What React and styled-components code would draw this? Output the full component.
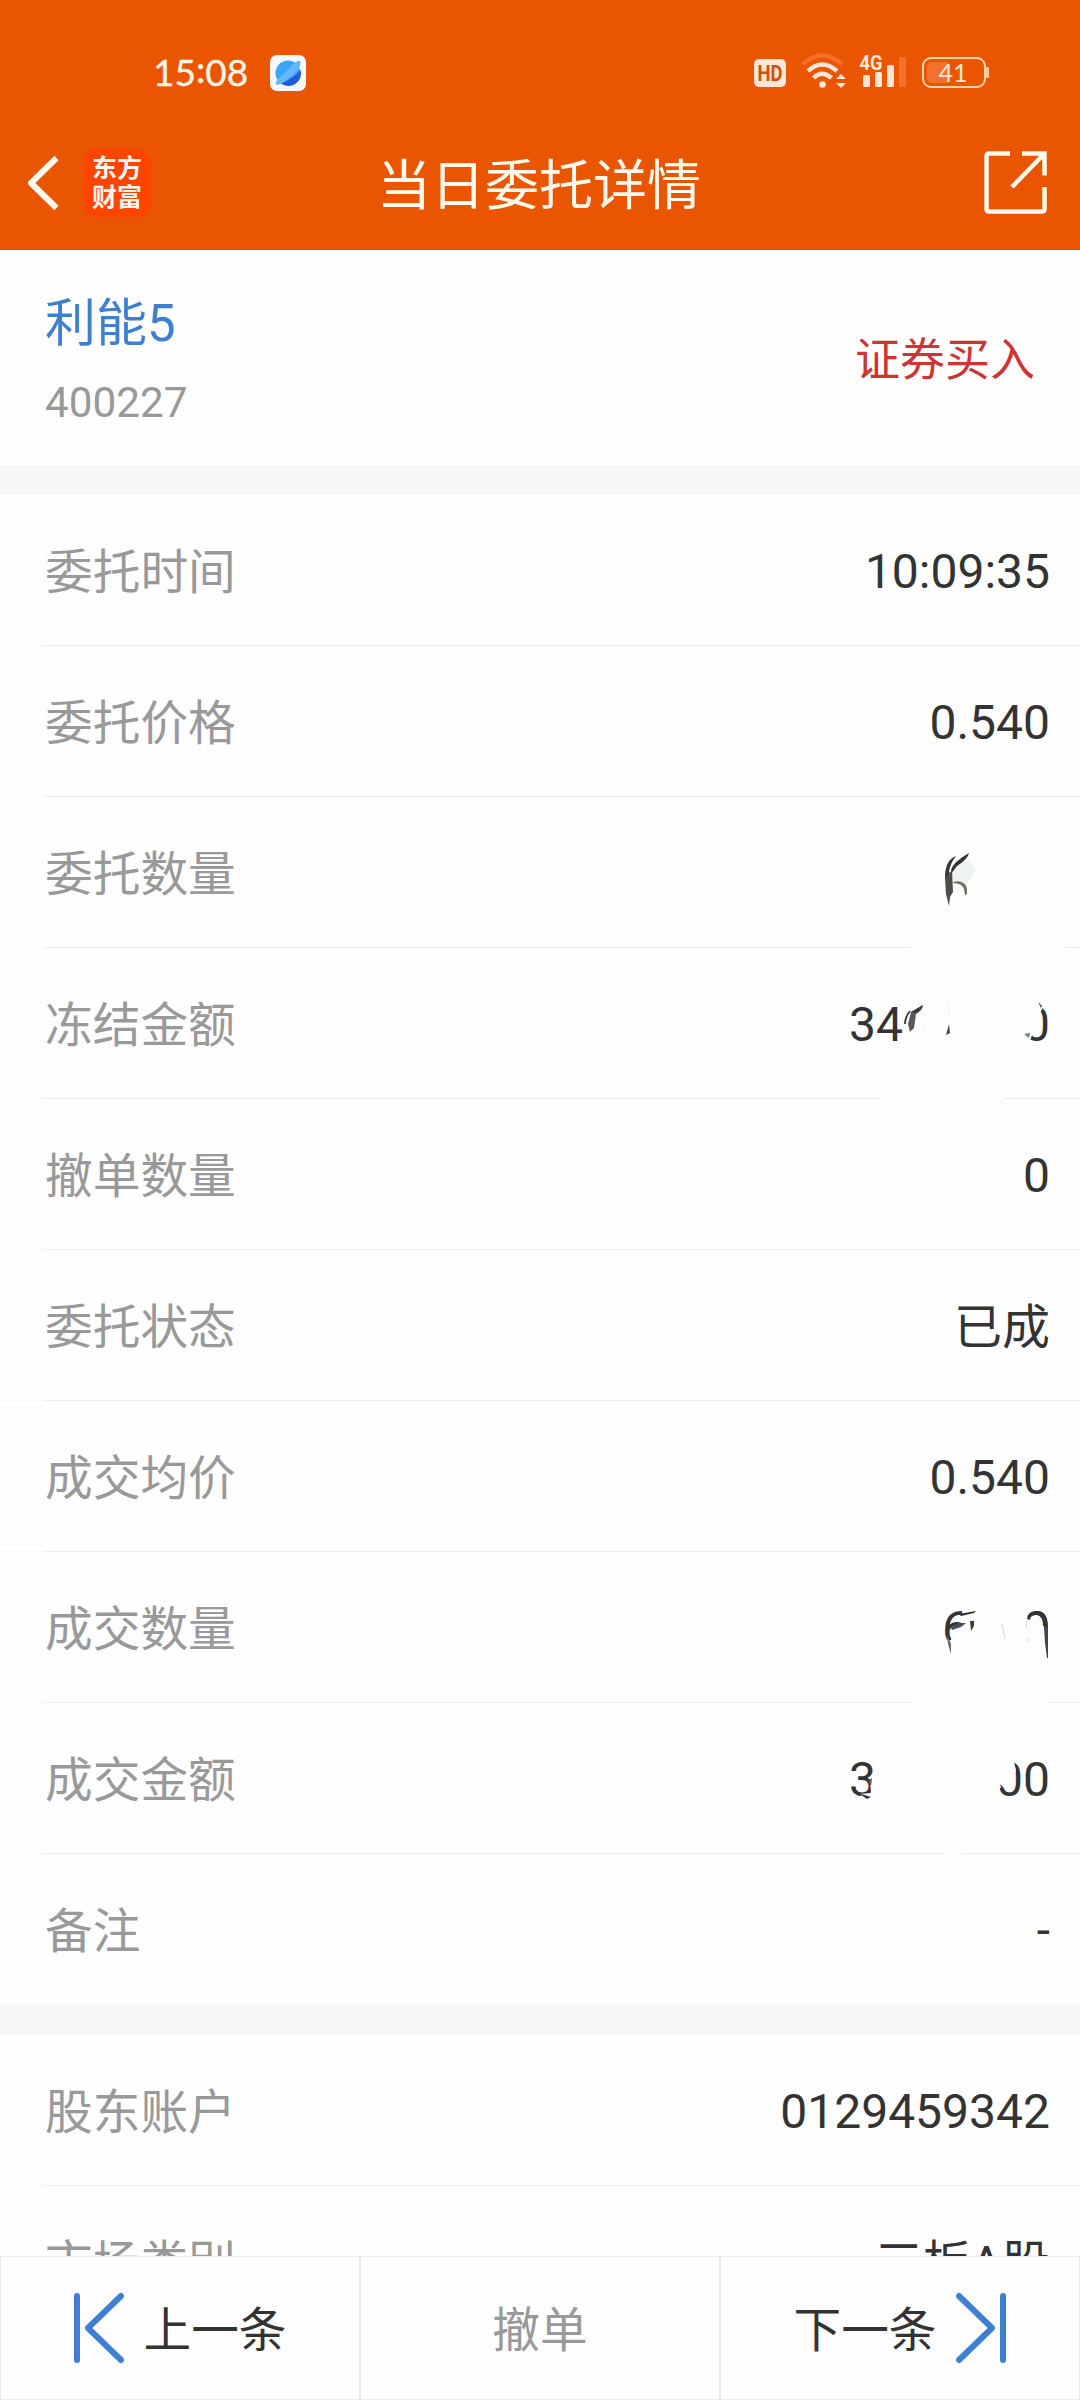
import React from "react";
import styled, { createGlobalStyle } from "styled-components";

const orderRows = [
  { label: "委托时间", value: "10:09:35" },
  { label: "委托价格", value: "0.540" },
  { label: "委托数量", value: "", smudge: "amount" },
  { label: "冻结金额", head: "34", tail: "0" },
  { label: "撤单数量", value: "0" },
  { label: "委托状态", value: "已成", hanzi: true },
  { label: "成交均价", value: "0.540" },
  { label: "成交数量", head: "6", tail: "0", width: 108, smudge: "deal" },
  { label: "成交金额", head: "3", tail: "00" },
  { label: "备注", value: "-" },
];

const accountRows = [
  { label: "股东账户", value: "0129459342" },
  { label: "市场类别", value: "三板A股", hanzi: true },
];

const AmountSmudge = () => (
  <Smudge $top={33} viewBox="0 0 250 360">
    <path d="M138 0L190 4L246 28L250 80L235 118L192 232L175 268L162 290L150 350L38 317L50 268L60 222L74 212V172L66 166L80 118L112 78Z" fill="#fdfdfd" />
    <path d="M190 170L210 172L211 179Q203 182 207 190Q204 199 199 206L190 206Z" fill="#fdfdfd" />
    <path d="M115 48Q115 30 126 26Q121 32 119 41L120 47ZM121 40Q123 32 139 23Q138 29 127 36L122 43Z" fill="#343434" />
    <path d="M122 42L138 30L146 41L137 53L123 51Z" fill="#dfe8e5" opacity="0.5" />
    <path d="M115 48L122 40L123 62L120 67L119 76L116 64Z" fill="#4c4d48" />
    <path d="M123 52Q134 49 137 58L137 64L135 65L134 59Q132 53 123 53Z" fill="#6c7464" />
    <path d="M80 181Q75 187 75 194" stroke="#333" strokeWidth="1.8" fill="none" />
    <path d="M81 182L93 175Q92 181 86 184L84 198L80 202L78 194Z" fill="#5d5857" />
    <path d="M81 182L93 175Q92 180 86 183Z" fill="#40364a" />
    <path d="M119 194L120 203L116 205ZM208 172L212 176L211 178Z" fill="#4b4355" />
    <path d="M194 204L200 203L199 208Z" fill="#6b8088" />
    <path d="M119 174V184M94 195L95 202" stroke="#eeeef0" fill="none" />
  </Smudge>
);

const DealSmudge = () => (
  <Smudge $top={28} viewBox="0 0 250 360">
    <path d="M146 12L180 22L195 32L197 43L214 46L240 62L220 118L184 182L186 190L183 202L177 207L170 208L163 220L127 283L104 268L38 226L30 214L41 213L40 201L43 198L82 122L114 80L115 61L121 60L124 48L146 40Z" fill="#fdfdfd" />
    <path d="M192 38L197 37L203 35L209 38L214 48L219 47V82H192Z" fill="#fdfdfd" />
    <path d="M208 31Q218 32 218 48L214 48Q213 36 207 35Q200 35 200 40L197 39Q199 31 208 31Z" fill="#343436" />
    <path d="M129 34L146 31L144 33L131 36Z" fill="#303034" />
    <path d="M121 48L128 43L136 43L131 47L122 50Z" fill="#514a5c" />
    <path d="M117 54L121 64L121 74L118 64Z" fill="#686868" />
    <path d="M140 41L144 41L144 46L141 51Z" fill="#364137" />
    <path d="M214 47L218 47L218 78L217 78L215 63Z" fill="#494346" />
    <path d="M172 44L175 59M197 40L196 48M197 60H200" stroke="#d9d5df" fill="none" />
    <path d="M28 213L41 217L37 219Z" fill="#343544" />
    <path d="M38 201L42 198L41 206Z" fill="#555" />
    <path d="M170 204L173 207L172 211Z" fill="#343544" />
  </Smudge>
);

const DetailRow = ({ row }) => (
  <Row>
    <Label>{row.label}</Label>
    {row.head ? (
      <PartialValue $width={row.width || 201}>
        <span>{row.head}</span>
        <span>{row.tail}</span>
      </PartialValue>
    ) : (
      <Value $hanzi={row.hanzi}>{row.value}</Value>
    )}
    {row.smudge === "amount" && <AmountSmudge />}
    {row.smudge === "deal" && <DealSmudge />}
  </Row>
);

const StatusIcons = () => (
  <svg width="240" height="40" viewBox="0 0 240 40">
    <rect x="4" y="6" width="32" height="28" rx="5" fill="#ffe6d6" />
    <text x="20" y="28" textAnchor="middle" fontFamily="Roboto, sans-serif" fontWeight="700" fontSize="22.5" textLength="25" lengthAdjust="spacingAndGlyphs" fill="#d4500a">HD</text>
    <g fill="none" stroke="#ffe6d6" strokeWidth="4.5">
      <path d="M53 11Q72 -6 92 11" stroke="#f66e2a" />
      <path d="M58 18Q72 5 87 18" />
      <path d="M63.500 25Q72 16.500 81.500 25" />
    </g>
    <circle cx="72.500" cy="31.500" r="3.300" fill="#ffe6d6" />
    <path d="M86 26L91 21L96 26ZM86 30H96L91 35Z" fill="#ffe6d6" />
    <text x="109.500" y="17" fontFamily="Roboto, sans-serif" fontWeight="700" fontSize="20" textLength="23" lengthAdjust="spacingAndGlyphs" fill="#ffe6d6">4G</text>
    <rect x="113" y="22" width="7" height="12" rx="1.500" fill="#ffe6d6" />
    <rect x="125" y="19" width="7" height="15" rx="1.500" fill="#ffe6d6" />
    <rect x="137" y="12" width="7" height="22" rx="1.500" fill="#ffe6d6" />
    <rect x="149" y="4" width="7" height="30" rx="1.500" fill="#f4702d" />
    <rect x="173" y="5" width="62" height="29" rx="8" fill="none" stroke="#ffd2a8" strokeWidth="2" />
    <path d="M182 9H198V30H182Q177 30 177 25V14Q177 9 182 9Z" fill="#f2712f" />
    <rect x="236" y="14" width="3" height="11" rx="1" fill="#ffc79a" />
    <text x="203" y="28.500" textAnchor="middle" fontFamily="Lato, sans-serif" fontSize="25" fill="#ffe6d6">41</text>
  </svg>
);

const App = () => {
  return (
    <Screen>
      <GlobalStyle />
      <Header>
        <StatusBar>
          <Clock>15<Colon>:</Colon>08</Clock>
          <svg width="36" height="36" viewBox="0 0 36 36">
            <rect width="36" height="36" rx="7" fill="#f5f7fb" />
            <circle cx="18" cy="18" r="12.500" fill="#3ba5fa" />
            <path d="M30.500 15A12.500 12.500 0 0 1 11 28.500Q24 23 30.500 15Z" fill="#215bdc" />
            <path d="M26 7Q30 4 30.500 7Q31 12 23 20Q13 29 7 30Q4 29 8 24Z" fill="#62b8fb" />
          </svg>
          <StatusRight>
            <StatusIcons />
          </StatusRight>
        </StatusBar>
        <NavBar>
          <NavLeft>
            <svg width="34" height="56" viewBox="0 0 34 56">
              <path d="M29.500 3L4 28L29.500 53" fill="none" stroke="#fff9ed" strokeWidth="6" strokeLinejoin="round" />
            </svg>
            <Logo>
              <span>东方</span>
              <span>财富</span>
            </Logo>
          </NavLeft>
          <Title>当日委托详情</Title>
          <NavRight>
            <svg width="64" height="64" viewBox="0 0 64 64" fill="none" stroke="#fff9ed" strokeWidth="4.500">
              <path d="M26 2.500H5Q2.500 2.500 2.500 5V58Q2.500 60.500 5 60.500H58Q60.500 60.500 60.500 58V36" />
              <path d="M38 2.500H60.500V24.500M60 3L28 36" />
            </svg>
          </NavRight>
        </NavBar>
      </Header>

      <Content>
        <Stock>
          <div>
            <StockName>利能5</StockName>
            <StockCode>400227</StockCode>
          </div>
          <Direction>证券买入</Direction>
        </Stock>
        <Section $gap={30}>
          {orderRows.map((row) => (
            <DetailRow key={row.label} row={row} />
          ))}
        </Section>
        <Section $gap={31}>
          {accountRows.map((row) => (
            <DetailRow key={row.label} row={row} />
          ))}
        </Section>
      </Content>

      <Footer>
        <FooterButton>
          <ArrowIcon viewBox="0 0 52 72">
            <path d="M4 4V68M48 4L15 36L48 68" />
          </ArrowIcon>
          <FooterText>上一条</FooterText>
        </FooterButton>
        <FooterButton $disabled>
          <FooterText>撤单</FooterText>
        </FooterButton>
        <FooterButton>
          <FooterText>下一条</FooterText>
          <ArrowIcon viewBox="0 0 52 72">
            <path d="M4 4L37 36L4 68M48 4V68" />
          </ArrowIcon>
        </FooterButton>
      </Footer>
    </Screen>
  );
};

const GlobalStyle = createGlobalStyle`
  * {
    box-sizing: border-box;
  }

  body {
    margin: 0;
    background: #fefefe;
  }
`;

const Screen = styled.div`
  display: flex;
  flex-direction: column;
  width: 1080px;
  height: 2400px;
  overflow: hidden;
  background: #fefefe;
  font-family: Roboto, "Noto Sans CJK SC", sans-serif;
`;

const Header = styled.header`
  flex: none;
  height: 250px;
  background: #ea5502;
`;

const StatusBar = styled.div`
  display: flex;
  align-items: center;
  height: 118px;
  padding: 28px 90px 0 153px;
`;

const Clock = styled.span`
  width: 117px;
  padding-bottom: 2px;
  color: #fff4e4;
  font-family: Lato, sans-serif;
  font-size: 37px;
  line-height: 44px;
  -webkit-text-stroke: 0.4px #fff4e4;
`;

const Colon = styled.span`
  position: relative;
  top: -3px;
`;

const StatusRight = styled.div`
  display: flex;
  margin-left: auto;
`;

const NavBar = styled.div`
  display: grid;
  grid-template-columns: 1fr auto 1fr;
  align-items: center;
  height: 132px;
  padding: 0 32px 3px 27px;
`;

const NavLeft = styled.div`
  display: flex;
  align-items: center;
  gap: 22px;
`;

const NavRight = styled.div`
  display: flex;
  justify-content: flex-end;
`;

const Logo = styled.div`
  display: flex;
  flex-direction: column;
  align-items: center;
  justify-content: center;
  width: 68px;
  height: 68px;
  padding-bottom: 4px;
  border-radius: 14px;
  background: #ff4400;
  color: #fff5ec;
  font-family: "Noto Sans CJK SC", sans-serif;
  font-size: 25px;
  font-weight: 700;
  line-height: 29px;
`;

const Title = styled.h1`
  margin: 0;
  padding: 9px 0 0 3px;
  color: #fff9ed;
  font-size: 54px;
  font-weight: 400;
  line-height: 72px;
`;

const Content = styled.main`
  flex: 1;
  min-height: 0;
  overflow: hidden;
`;

const Stock = styled.section`
  display: flex;
  align-items: center;
  justify-content: space-between;
  height: 215px;
  padding: 4px 45px 0;
`;

const StockName = styled.div`
  color: #3f7fd0;
  font-size: 51px;
  line-height: 76px;
`;

const StockCode = styled.div`
  margin-top: 11px;
  color: #999;
  font-size: 42.3px;
  line-height: 60px;
`;

const Direction = styled.div`
  padding-top: 3px;
  color: #ce3433;
  font-size: 45px;
  line-height: 64px;
`;

const Section = styled.section`
  border-top: ${(props) => props.$gap}px solid #f6f7f9;
`;

const Row = styled.div`
  position: relative;
  display: flex;
  align-items: center;
  justify-content: space-between;
  height: 151px;
  padding: 2px 30px 0 45px;
  border-bottom: 1px solid #f9f9f9;

  &::after {
    content: "";
    position: absolute;
    right: 0;
    bottom: -1px;
    left: 45px;
    height: 1px;
    background: #ebebeb;
  }

  &:last-child {
    height: 150px;
    border-bottom: none;
  }

  &:last-child::after {
    display: none;
  }
`;

const Label = styled.span`
  padding-top: 3px;
  color: #999;
  font-size: 47.7px;
  line-height: 68px;
`;

const Value = styled.span`
  padding-top: ${(props) => (props.$hanzi ? 3 : 1)}px;
  color: #333;
  font-size: 48px;
  line-height: 68px;
`;

const PartialValue = styled(Value)`
  display: flex;
  justify-content: space-between;
  width: ${(props) => props.$width}px;
`;

const Smudge = styled.svg`
  position: absolute;
  top: ${(props) => props.$top}px;
  right: 0;
  z-index: 1;
  width: 250px;
  height: 360px;
`;

const Footer = styled.footer`
  flex: none;
  display: grid;
  grid-template-columns: repeat(3, 1fr);
  height: 144px;
`;

const FooterButton = styled.button`
  display: flex;
  align-items: center;
  justify-content: center;
  gap: 18px;
  padding: 0;
  border: 1px solid #ebebeb;
  background: #fefefe;
  color: ${(props) => (props.$disabled ? "#999" : "#333")};
  font-family: inherit;
  font-size: 47.7px;
`;

const FooterText = styled.span`
  padding-bottom: 4px;
`;

const ArrowIcon = styled.svg`
  width: 52px;
  height: 72px;
  margin-bottom: 1px;
  fill: none;
  stroke: #3f80d3;
  stroke-width: 6px;
  stroke-linecap: round;
  stroke-linejoin: round;
`;

export default App;
